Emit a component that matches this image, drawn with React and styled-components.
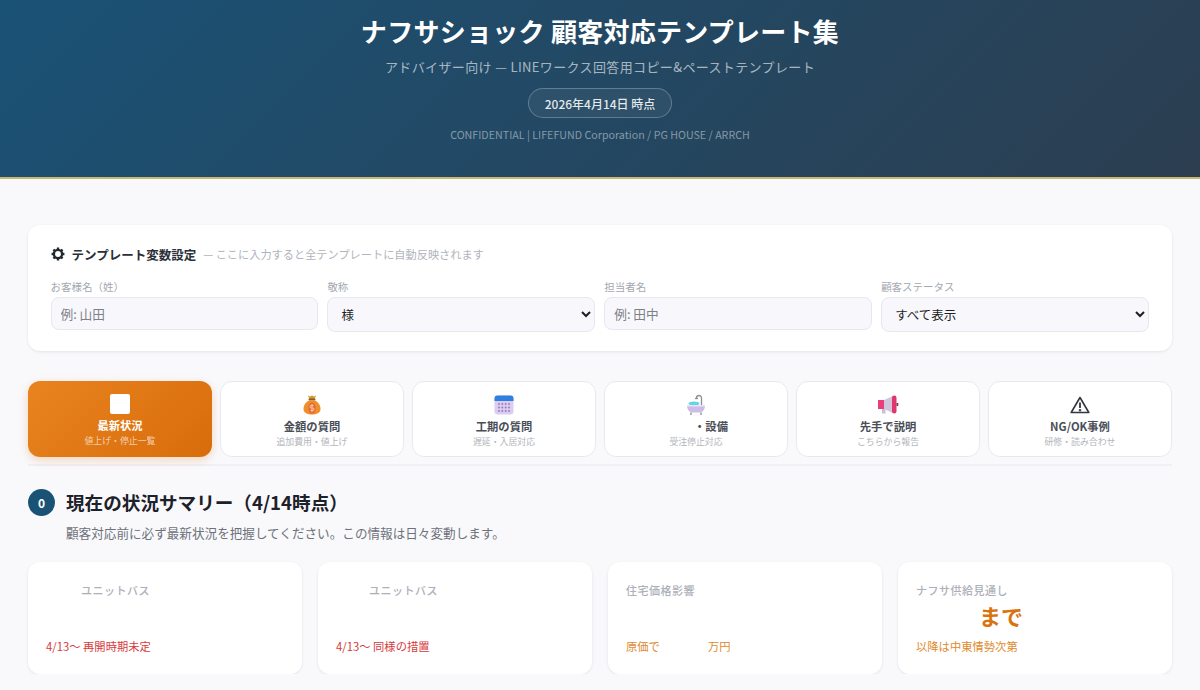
import React from "react";
import styled, { createGlobalStyle } from "styled-components";

const GlobalStyle = createGlobalStyle`
  * {
    box-sizing: border-box;
  }
  body {
    margin: 0;
    background: #f9f9fc;
    color: #1f2933;
    font-family: "Noto Sans CJK JP", "Noto Sans", sans-serif;
  }
`;

const Hero = styled.header`
  height: 179px;
  padding-top: 12px;
  background: linear-gradient(135deg, #1a5276 0%, #2c3e50 100%);
  border-bottom: 2px solid #c9b872;
  display: flex;
  flex-direction: column;
  align-items: center;
  text-align: center;
`;

const HeroTitle = styled.h1`
  margin: 0;
  font-size: 26px;
  line-height: 38px;
  letter-spacing: 0.27px;
  font-weight: 700;
  color: #ffffff;
`;

const HeroSub = styled.p`
  margin: 7px 0 0;
  font-size: 13px;
  line-height: 20px;
  letter-spacing: 0.37px;
  color: rgba(255, 255, 255, 0.62);
`;

const DatePill = styled.div`
  margin-top: 11px;
  height: 30px;
  padding: 0 16px;
  display: flex;
  align-items: center;
  font-size: 12px;
  font-weight: 500;
  color: rgba(255, 255, 255, 0.88);
  background: rgba(255, 255, 255, 0.05);
  border: 1px solid rgba(255, 255, 255, 0.25);
  border-radius: 15px;
`;

const HeroNote = styled.p`
  margin: 9px 0 0;
  font-size: 10.7px;
  line-height: 16px;
  color: rgba(255, 255, 255, 0.45);
`;

const Main = styled.main`
  padding: 46px 28px 0;
`;

const SettingsCard = styled.section`
  height: 126px;
  padding: 19px 23.5px 0 22.5px;
  background: #ffffff;
  border-radius: 12px;
  box-shadow: 0 1px 3px rgba(30, 40, 80, 0.1);
`;

const SettingsHead = styled.div`
  display: flex;
  align-items: center;
  height: 20px;
  gap: 7px;
`;

const SettingsTitle = styled.strong`
  font-size: 12.5px;
  font-weight: 700;
  color: #2a2f38;
`;

const SettingsHint = styled.span`
  font-size: 11.2px;
  color: #b0b4bc;
`;

const FieldGrid = styled.div`
  margin-top: 15px;
  display: grid;
  grid-template-columns: repeat(4, 1fr);
  gap: 9.5px;
`;

const Field = styled.label`
  display: flex;
  flex-direction: column;
  gap: 3px;
`;

const FieldLabel = styled.span`
  font-size: 10.5px;
  line-height: 15px;
  color: #a4a8b0;
`;

const TextInput = styled.input`
  width: 100%;
  height: 33px;
  padding: 0 9px;
  background: #f8f8fc;
  border: 1px solid #e6e7ef;
  border-radius: 8px;
  font: 12.7px "Noto Sans CJK JP", sans-serif;
  &::placeholder {
    color: #7c8087;
    opacity: 1;
  }
`;

const SelectInput = styled.select`
  width: 100%;
  height: 35px;
  padding: 0 9px;
  background: #f8f8fc;
  border: 1px solid #e6e7ef;
  border-radius: 8px;
  color: #1c1f24;
  font: 12.5px "Noto Sans CJK JP", sans-serif;
`;

const TabRow = styled.nav`
  margin-top: 30px;
  padding-bottom: 7px;
  display: grid;
  grid-template-columns: repeat(6, 1fr);
  gap: 8px;
  border-bottom: 2px solid #f0f0f5;
`;

const Tab = styled.button`
  height: 76px;
  padding: 10px 0 0;
  display: flex;
  flex-direction: column;
  align-items: center;
  border-radius: 12px;
  font-family: inherit;
  background: ${(p) =>
    p.$active ? "linear-gradient(135deg, #e8841f 0%, #d86c0b 100%)" : "#ffffff"};
  border: ${(p) => (p.$active ? "none" : "1px solid #e8e9f0")};
  box-shadow: ${(p) =>
    p.$active ? "0 3px 10px rgba(224, 120, 20, 0.28)" : "none"};
`;

const TabIcon = styled.span`
  height: 26px;
  display: flex;
  align-items: center;
  justify-content: center;
`;

const BlankGlyph = styled.span`
  width: 20px;
  height: 20px;
  margin-left: -1px;
  border-radius: 2px;
  background: #ffffff;
`;

const TabLabel = styled.span`
  font-size: 11.3px;
  line-height: 17px;
  font-weight: 700;
  color: ${(p) => (p.$active ? "#ffffff" : "#4a4e57")};
`;

const TabSub = styled.span`
  font-size: 8.9px;
  line-height: 13px;
  color: ${(p) => (p.$active ? "rgba(255, 255, 255, 0.65)" : "#b2b5bc")};
`;

const Blank = styled.span`
  display: inline-block;
  width: ${(p) => p.$w}px;
`;

const SectionHead = styled.div`
  margin-top: 22px;
  display: flex;
  align-items: center;
  gap: 11px;
`;

const SectionNum = styled.span`
  width: 27px;
  height: 27px;
  border-radius: 50%;
  background: #1a5276;
  color: #ffffff;
  font-size: 12px;
  font-weight: 700;
  display: flex;
  align-items: center;
  justify-content: center;
`;

const SectionTitle = styled.h2`
  margin: 0;
  font-size: 18.6px;
  line-height: 28px;
  font-weight: 700;
  color: #1d2129;
`;

const SectionNote = styled.p`
  margin: 7px 0 0 38px;
  font-size: 12.6px;
  line-height: 20px;
  color: #6d7179;
`;

const StatGrid = styled.div`
  margin-top: 19px;
  display: grid;
  grid-template-columns: repeat(4, 1fr);
  gap: 16px;
`;

const StatCard = styled.article`
  height: 112px;
  padding: 20px 18px 0;
  background: #ffffff;
  border-radius: 12px;
  box-shadow: 0 1px 3px rgba(30, 40, 80, 0.1);
  display: flex;
  flex-direction: column;
`;

const StatLabel = styled.div`
  font-size: 11px;
  line-height: 16px;
  letter-spacing: 0.5px;
  font-weight: 500;
  color: #adb0b8;
`;

const StatValue = styled.div`
  height: 30px;
  margin-top: 2px;
  font-size: 22px;
  line-height: 30px;
  font-weight: 700;
  color: #d9730d;
`;

const StatNote = styled.div`
  margin-top: 8px;
  font-size: 11.3px;
  line-height: 16px;
  color: ${(p) => (p.$tone === "red" ? "#d63a3a" : "#e08a2e")};
`;

const GearIcon = () => (
  <svg width="14" height="14" viewBox="0 0 24 24" fill="none" stroke="#23272e">
    <circle cx="12" cy="12" r="7" strokeWidth="4" />
    <path
      strokeWidth="4"
      d="M12 1v4M12 19v4M1 12h4M19 12h4M4.200 4.200l2.800 2.800M17 17l2.800 2.800M4.200 19.800L7 17M17 7l2.800-2.800"
    />
  </svg>
);

const MoneyBagIcon = () => (
  <svg width="20" height="22" viewBox="0 0 20 22">
    <path d="M6 1.500l2 1 2-1 2 1 2-1-1.500 4h-5z" fill="#d9962a" />
    <rect x="6.500" y="4.500" width="7" height="2" rx="1" fill="#8a5a20" />
    <path d="M7 6.500C3 8.500 1.500 12 1.500 15c0 4 4 5.500 8.500 5.500s8.500-1.500 8.500-5.500c0-3-1.500-6.500-5.500-8.500z" fill="#ee8f2c" />
    <ellipse cx="10" cy="14" rx="3.600" ry="5.500" fill="#e8663a" />
    <path d="M10 10v8M11.500 11.500H9.200a1.200 1.200 0 0 0 0 2.500h1.600a1.200 1.200 0 0 1 0 2.500H8.500" stroke="#fbd9a8" strokeWidth="0.9" fill="none" />
  </svg>
);

const CalendarIcon = () => (
  <svg width="20" height="20" viewBox="0 0 20 20">
    <rect x="0.500" y="0.500" width="19" height="19" rx="3" fill="#dccdf0" />
    <path d="M0.500 6V3.500a3 3 0 0 1 3-3h13a3 3 0 0 1 3 3V6z" fill="#2f7fe0" />
    {[9, 12.5, 16].map((y) =>
      [5, 8.300, 11.700, 15].map((x) => (
        <circle key={`${x}-${y}`} cx={x} cy={y} r="1" fill="#9a7cc4" />
      ))
    )}
  </svg>
);

const BathIcon = () => (
  <svg width="20" height="22" viewBox="0 0 20 22">
    <path d="M15.500 11V4a2.500 2.500 0 0 0-5 0" stroke="#8f8f98" strokeWidth="1.300" fill="none" />
    <path d="M9 4.500h3" stroke="#8f8f98" strokeWidth="1.300" />
    <ellipse cx="8" cy="9.500" rx="5.500" ry="2" fill="#62d6e4" />
    <path d="M1 11h18c0 5-2.500 7.500-6 7.500H7c-3.500 0-6-2.500-6-7.500z" fill="#cdbce6" />
    <path d="M1 11h18v1.500H1z" fill="#e9e4f4" />
    <path d="M5 18.500V21M15 18.500V21" stroke="#8f8f98" strokeWidth="1.300" />
  </svg>
);

const MegaphoneIcon = () => (
  <svg width="22" height="20" viewBox="0 0 22 20">
    <rect x="5" y="13" width="3.500" height="5.500" fill="#c9bfd8" />
    <rect x="1" y="5" width="6" height="9" fill="#e83f78" />
    <path d="M7 5l9-4v17l-9-4z" fill="#cfc6dc" />
    <rect x="15" y="0.500" width="4.500" height="18" rx="2.200" fill="#e0356f" />
    <rect x="19.500" y="8" width="1.800" height="3" fill="#7a3a58" />
  </svg>
);

const WarningIcon = () => (
  <svg width="20" height="18" viewBox="0 0 20 18" fill="none" stroke="#33363c" strokeWidth="1.600">
    <path d="M10 1.500L1.200 16.500h17.600z" strokeLinejoin="round" />
    <path d="M10 6.500v5.500" strokeWidth="1.800" />
    <circle cx="10" cy="14.200" r="0.500" />
  </svg>
);

const tabs = [
  { icon: <BlankGlyph />, label: "最新状況", sub: "値上げ・停止一覧", active: true },
  { icon: <MoneyBagIcon />, label: "金額の質問", sub: "追加費用・値上げ" },
  { icon: <CalendarIcon />, label: "工期の質問", sub: "遅延・入居対応" },
  { icon: <BathIcon />, label: <><Blank $w={30} />・設備</>, sub: "受注停止対応" },
  { icon: <MegaphoneIcon />, label: "先手で説明", sub: "こちらから報告" },
  { icon: <WarningIcon />, label: "NG/OK事例", sub: "研修・読み合わせ" },
];

const App = () => {
  return (
    <>
      <GlobalStyle />
      <Hero>
        <HeroTitle>ナフサショック 顧客対応テンプレート集</HeroTitle>
        <HeroSub>アドバイザー向け — LINEワークス回答用コピー&amp;ペーストテンプレート</HeroSub>
        <DatePill>2026年4月14日 時点</DatePill>
        <HeroNote>CONFIDENTIAL | LIFEFUND Corporation / PG HOUSE / ARRCH</HeroNote>
      </Hero>
      <Main>
        <SettingsCard>
          <SettingsHead>
            <GearIcon />
            <SettingsTitle>テンプレート変数設定</SettingsTitle>
            <SettingsHint>— ここに入力すると全テンプレートに自動反映されます</SettingsHint>
          </SettingsHead>
          <FieldGrid>
            <Field>
              <FieldLabel>お客様名（姓）</FieldLabel>
              <TextInput placeholder="例: 山田" />
            </Field>
            <Field>
              <FieldLabel>敬称</FieldLabel>
              <SelectInput defaultValue="様">
                <option>様</option>
                <option>さん</option>
              </SelectInput>
            </Field>
            <Field>
              <FieldLabel>担当者名</FieldLabel>
              <TextInput placeholder="例: 田中" />
            </Field>
            <Field>
              <FieldLabel>顧客ステータス</FieldLabel>
              <SelectInput defaultValue="すべて表示">
                <option>すべて表示</option>
              </SelectInput>
            </Field>
          </FieldGrid>
        </SettingsCard>

        <TabRow>
          {tabs.map((tab, index) => (
            <Tab key={index} $active={tab.active}>
              <TabIcon>{tab.icon}</TabIcon>
              <TabLabel $active={tab.active}>{tab.label}</TabLabel>
              <TabSub $active={tab.active}>{tab.sub}</TabSub>
            </Tab>
          ))}
        </TabRow>

        <SectionHead>
          <SectionNum>0</SectionNum>
          <SectionTitle>現在の状況サマリー（4/14時点）</SectionTitle>
        </SectionHead>
        <SectionNote>顧客対応前に必ず最新状況を把握してください。この情報は日々変動します。</SectionNote>

        <StatGrid>
          <StatCard>
            <StatLabel><Blank $w={35} />ユニットバス</StatLabel>
            <StatValue />
            <StatNote $tone="red">4/13〜 再開時期未定</StatNote>
          </StatCard>
          <StatCard>
            <StatLabel><Blank $w={33} />ユニットバス</StatLabel>
            <StatValue />
            <StatNote $tone="red">4/13〜 同様の措置</StatNote>
          </StatCard>
          <StatCard>
            <StatLabel>住宅価格影響</StatLabel>
            <StatValue />
            <StatNote>原価で<Blank $w={48} />万円</StatNote>
          </StatCard>
          <StatCard>
            <StatLabel>ナフサ供給見通し</StatLabel>
            <StatValue><Blank $w={63} />まで</StatValue>
            <StatNote>以降は中東情勢次第</StatNote>
          </StatCard>
        </StatGrid>
      </Main>
    </>
  );
};

export default App;
